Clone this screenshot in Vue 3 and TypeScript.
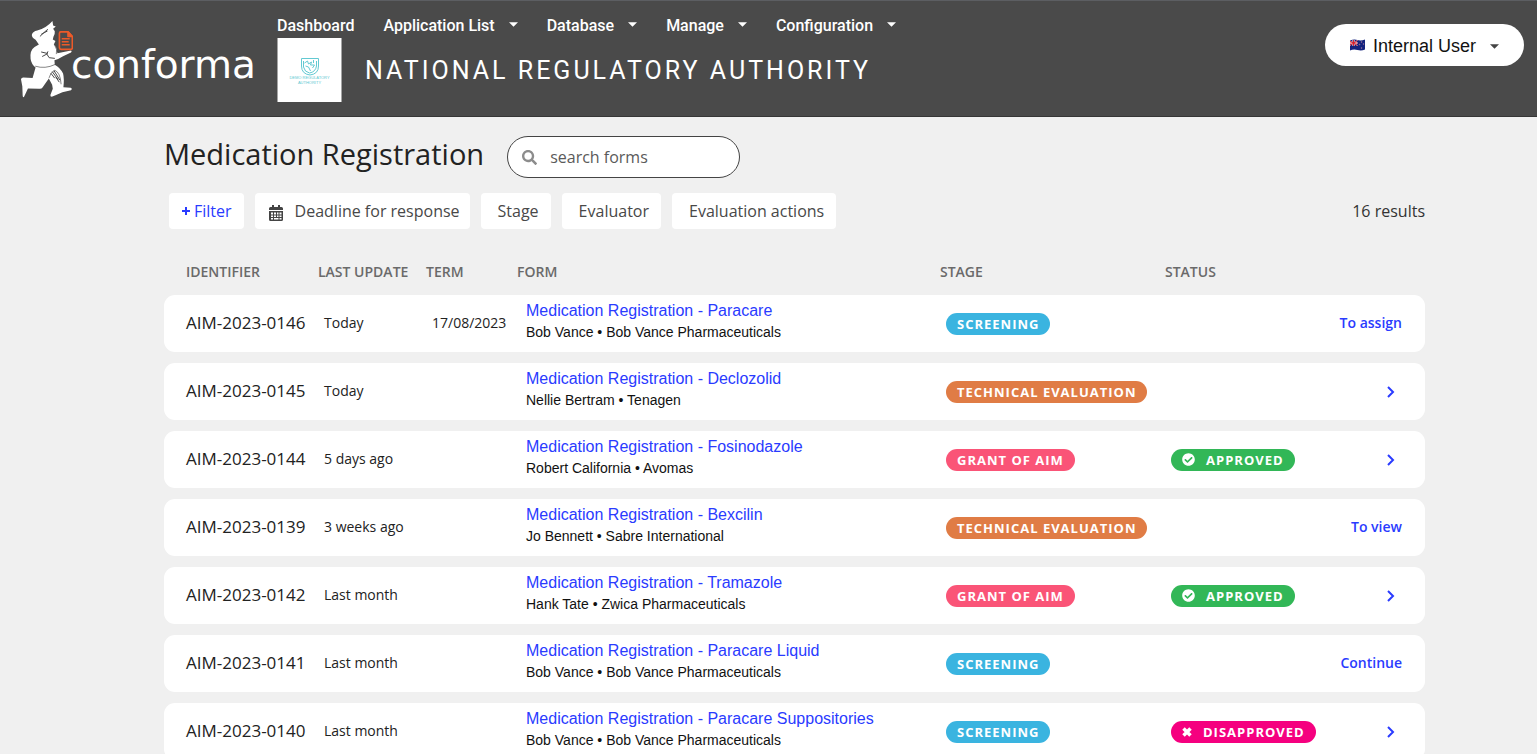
<script setup lang="ts">
interface MenuItem {
  label: string
  dropdown: boolean
}

type StageName = 'Screening' | 'Technical evaluation' | 'Grant of AIM'
type StatusName = 'Approved' | 'Disapproved'

interface Application {
  id: string
  updated: string
  term?: string
  form: string
  applicant: string
  stage: StageName
  status?: StatusName
  action?: string
}

const menu: MenuItem[] = [
  { label: 'Dashboard', dropdown: false },
  { label: 'Application List', dropdown: true },
  { label: 'Database', dropdown: true },
  { label: 'Manage', dropdown: true },
  { label: 'Configuration', dropdown: true },
]

const filters: string[] = ['Stage', 'Evaluator', 'Evaluation actions']

const stageClass: Record<StageName, string> = {
  'Screening': 'screening',
  'Technical evaluation': 'technical',
  'Grant of AIM': 'grant',
}

const applications: Application[] = [
  { id: 'AIM-2023-0146', updated: 'Today', term: '17/08/2023', form: 'Paracare', applicant: 'Bob Vance • Bob Vance Pharmaceuticals', stage: 'Screening', action: 'To assign' },
  { id: 'AIM-2023-0145', updated: 'Today', form: 'Declozolid', applicant: 'Nellie Bertram • Tenagen', stage: 'Technical evaluation' },
  { id: 'AIM-2023-0144', updated: '5 days ago', form: 'Fosinodazole', applicant: 'Robert California • Avomas', stage: 'Grant of AIM', status: 'Approved' },
  { id: 'AIM-2023-0139', updated: '3 weeks ago', form: 'Bexcilin', applicant: 'Jo Bennett • Sabre International', stage: 'Technical evaluation', action: 'To view' },
  { id: 'AIM-2023-0142', updated: 'Last month', form: 'Tramazole', applicant: 'Hank Tate • Zwica Pharmaceuticals', stage: 'Grant of AIM', status: 'Approved' },
  { id: 'AIM-2023-0141', updated: 'Last month', form: 'Paracare Liquid', applicant: 'Bob Vance • Bob Vance Pharmaceuticals', stage: 'Screening', action: 'Continue' },
  { id: 'AIM-2023-0140', updated: 'Last month', form: 'Paracare Suppositories', applicant: 'Bob Vance • Bob Vance Pharmaceuticals', stage: 'Screening', status: 'Disapproved' },
]
</script>

<template>
  <div class="page">
    <header class="topbar">
      <a class="brand" href="#">
        <svg class="mascot" viewBox="30 15 160 234" width="53" height="78" aria-hidden="true">
          <path fill="#fff" d="M128 17 L130 31 L138 34 L130 41 L135 48 Q136 58 131 65 L129 73 L137 78 L132 88 Q141 94 141 108 L143 115 L184 106 Q188 108 184 112 L160 124 Q148 132 134 136 L135 149 Q152 158 160 176 Q164 192 161 217 L183 219 Q189 222 184 226 L158 232 Q140 240 126 246 Q120 246 122 240 L129 222 L127 210 L117 191 L98 218 Q95 223 88 222 L54 221 L42 247 Q38 248 38 242 L37 214 L33 193 Q34 188 40 188 L68 189 L77 158 Q64 147 62 132 Q59 106 74 96 L87 88 L77 74 Q64 66 66 58 Q69 49 82 46 Q110 38 128 17 Z" />
          <g fill="none" stroke="#484848" stroke-linecap="round" stroke-linejoin="round">
            <path stroke-width="3" d="M91 63 Q102 52 113 43 M95 57 L112 48" />
            <path stroke-width="3" d="M95 111 L112 115 M98 124 L111 117 L118 128 L134 130 M111 117 L114 110" />
            <path stroke-width="2" d="M77 154 Q106 163 135 149 M135 90 Q144 104 140 116" />
            <path stroke-width="2" d="M118 188 Q121 172 135 166 Q152 173 154 207" />
            <path stroke-width="3" d="M124 176 L134 189 M128 171 L144 193 M133 168 L150 195 M139 188 L148 201" />
          </g>
          <g fill="none" stroke="#ec5a29" stroke-width="5" stroke-linejoin="round">
            <path d="M153 50 H175 L188 64 V99 Q188 103 184 103 H154 Q149 103 149 98 V55 Q149 50 153 50 Z" />
            <path fill="#ec5a29" d="M175 50 V64 H188 Z" />
            <path d="M156 71 H180 M156 80 H177 M156 89 H180" />
          </g>
        </svg>
        <span class="wordmark">conforma</span>
      </a>

      <div class="center">
        <nav class="menu">
          <template v-for="item in menu" :key="item.label">
            <button v-if="item.dropdown" type="button" class="menu-item">
              {{ item.label }}
              <svg class="caret" viewBox="0 0 10 5" width="9" height="5" aria-hidden="true"><path fill="currentColor" d="M0 0H10L5 5Z" /></svg>
            </button>
            <a v-else class="menu-item" href="#">{{ item.label }}</a>
          </template>
        </nav>
        <div class="authority">
          <svg class="crest" viewBox="0 0 64 64" width="65" height="64" role="img" aria-label="Demo Regulatory Authority">
            <rect width="64" height="64" fill="#fff" />
            <g fill="none" stroke="#62c9d2" stroke-width="1">
              <path d="M24 20.500 H41 V28 Q41 36 32.500 37 Q24 36 24 28 Z" />
              <path d="M26 23 V29 Q27 34 32 35 Q38 34 39 28 V23" />
              <path d="M27 25 L30 23 L31 26 L34 24 L33 27 L37 27 L35 30 M28 28 L31 29 L33 33 M36 22 V25" />
            </g>
            <text x="32" y="41" class="crest-text">DEMO REGULATORY</text>
            <text x="32" y="46" class="crest-text">AUTHORITY</text>
          </svg>
          <span class="authority-name">NATIONAL REGULATORY AUTHORITY</span>
        </div>
      </div>

      <button type="button" class="user">
        <svg class="flag" viewBox="0 0 30 24" width="15" height="12" aria-hidden="true">
          <path fill="#14237d" d="M0 3 Q8 0 15 2 T30 1 V21 Q23 24 15 22 T0 23 Z" />
          <path d="M0 4 L15 13 M15 3 L0 13" stroke="#fff" stroke-width="2" />
          <path d="M7 2 V14 M0 8 H15" stroke="#fff" stroke-width="4" />
          <path d="M7 2 V14 M0 8 H15 M0 4 L15 13 M15 3 L0 13" stroke="#d8232f" stroke-width="2" />
          <g fill="#d8232f" stroke="#8d8fc0" stroke-width="1"><circle cx="23" cy="6" r="1" /><circle cx="19" cy="11" r="1" /><circle cx="27" cy="10" r="1" /><circle cx="23" cy="18" r="1" /></g>
        </svg>
        <span>Internal User</span>
        <svg class="user-caret" viewBox="0 0 10 5" width="9" height="5" aria-hidden="true"><path fill="#444" d="M0 0H10L5 5Z" /></svg>
      </button>
    </header>

    <main class="content">
      <div class="heading">
        <h1>Medication Registration</h1>
        <label class="search">
          <svg viewBox="0 0 512 512" width="15" height="15" aria-hidden="true">
            <path fill="#8c8c8c" d="M505 442.700L405.300 343c-4.500-4.500-10.600-7-17-7H372c27.600-35.300 44-79.700 44-128C416 93.100 322.900 0 208 0S0 93.100 0 208s93.100 208 208 208c48.300 0 92.700-16.400 128-44v16.300c0 6.400 2.500 12.500 7 17l99.700 99.700c9.400 9.400 24.600 9.400 33.900 0l28.300-28.300c9.400-9.400 9.400-24.600.1-34zM208 336c-70.700 0-128-57.200-128-128 0-70.700 57.200-128 128-128 70.700 0 128 57.200 128 128 0 70.700-57.200 128-128 128z" />
          </svg>
          <input type="text" placeholder="search forms" aria-label="search forms">
        </label>
      </div>

      <div class="filters">
        <button type="button" class="chip add">
          <svg viewBox="0 0 8 8" width="8" height="8" aria-hidden="true"><path d="M4 0V8M0 4H8" stroke="currentColor" stroke-width="2" /></svg>
          Filter
        </button>
        <button type="button" class="chip dated">
          <svg viewBox="0 0 14 16" width="14" height="16" aria-hidden="true">
            <path fill="#444" d="M3 0h2v2h4V0h2v2h1.500A1.500 1.500 0 0 1 14 3.500V5H0V3.500A1.500 1.500 0 0 1 1.500 2H3zM0 6h14v8.500a1.500 1.500 0 0 1-1.500 1.500h-11A1.500 1.500 0 0 1 0 14.500z" />
            <path fill="#fff" d="M2 7.500h2v2H2zM5 7.500h2v2H5zM8 7.500h1.500v2H8zM10.500 7.500h2v2h-2zM2 10.500h2v1.500H2zM5 10.500h2v1.500H5zM8 10.500h1.500v1.500H8zM10.500 10.500h2v1.500h-2zM2 13h2v1.500H2zM5 13h4.500v1.500H5zM10.500 13h2v1.500h-2z" />
          </svg>
          Deadline for response
        </button>
        <button v-for="name in filters" :key="name" type="button" class="chip">{{ name }}</button>
        <span class="results">16 results</span>
      </div>

      <table class="list">
        <colgroup>
          <col class="col-id">
          <col class="col-updated">
          <col class="col-term">
          <col>
          <col class="col-stage">
          <col class="col-status">
          <col class="col-action">
        </colgroup>
        <thead>
          <tr>
            <th>Identifier</th>
            <th>Last update</th>
            <th>Term</th>
            <th>Form</th>
            <th>Stage</th>
            <th>Status</th>
            <td></td>
          </tr>
        </thead>
        <tbody>
          <tr v-for="app in applications" :key="app.id">
            <td class="id">{{ app.id }}</td>
            <td>{{ app.updated }}</td>
            <td>{{ app.term }}</td>
            <td class="form">
              <a href="#">Medication Registration - {{ app.form }}</a>
              <span>{{ app.applicant }}</span>
            </td>
            <td class="tag"><span class="pill" :class="stageClass[app.stage]">{{ app.stage }}</span></td>
            <td class="tag">
              <span v-if="app.status === 'Approved'" class="pill approved">
                <svg viewBox="0 0 512 512" width="13" height="13" aria-hidden="true"><path fill="#fff" d="M504 256c0 137-111 248-248 248S8 393 8 256 119 8 256 8s248 111 248 248zM227.300 387.300l184-184c6.200-6.200 6.200-16.400 0-22.600l-22.600-22.600c-6.200-6.200-16.400-6.200-22.600 0L216 308.100l-70.100-70.100c-6.200-6.200-16.400-6.200-22.600 0l-22.600 22.600c-6.200 6.200-6.200 16.400 0 22.600l104 104c6.200 6.300 16.400 6.300 22.600.1z" /></svg>
                {{ app.status }}
              </span>
              <span v-else-if="app.status === 'Disapproved'" class="pill disapproved">
                <svg viewBox="0 0 10 10" width="10" height="10" aria-hidden="true"><path d="M1.500 1.500L8.500 8.500M8.500 1.500L1.500 8.500" stroke="#fff" stroke-width="3.500" /></svg>
                {{ app.status }}
              </span>
            </td>
            <td class="action">
              <a v-if="app.action" href="#">{{ app.action }}</a>
              <a v-else class="open" href="#" aria-label="Open">
                <svg viewBox="0 0 8 12" width="8" height="12" aria-hidden="true"><path d="M1 1L6 6L1 11" fill="none" stroke="currentColor" stroke-width="2" /></svg>
              </a>
            </td>
          </tr>
        </tbody>
      </table>
    </main>
  </div>
</template>

<style>
body {
  background: #f0f0f0;
}
html {
  overflow: hidden;
}
</style>

<style scoped>
.page {
  font-family: "Open Sans", sans-serif;
  color: #222;
}
a {
  text-decoration: none;
}
button {
  border: 0;
  margin: 0;
  font-family: inherit;
  cursor: pointer;
}
.topbar {
  display: flex;
  align-items: flex-start;
  box-sizing: border-box;
  height: 117px;
  padding: 0 13px 0 20px;
  background: #4a4a4a;
  border-top: 1px solid #5c5e62;
  border-bottom: 1px solid #363636;
}
.brand {
  display: flex;
  align-items: flex-start;
  width: 257px;
  padding-top: 19px;
  flex: none;
  color: #fff;
}
.mascot {
  flex: none;
}
.wordmark {
  margin-left: -2px;
  padding-top: 21px;
  font: 39px/48px "DejaVu Sans", sans-serif;
}
.center {
  flex: 1;
}
.menu {
  display: flex;
  gap: 29px;
  padding-top: 13px;
}
.menu-item {
  display: flex;
  align-items: center;
  padding: 0;
  background: none;
  color: #fff;
  font: 500 16px/24px Roboto, sans-serif;
  white-space: nowrap;
}
.caret {
  margin: 0 0 3px 14px;
}
.authority {
  display: flex;
  align-items: center;
  gap: 23px;
}
.crest-text {
  fill: #62c9d2;
  font: 4px "Liberation Sans", sans-serif;
  text-anchor: middle;
}
.authority-name {
  padding-top: 2px;
  color: #fff;
  font: 25px/32px Roboto, sans-serif;
  letter-spacing: 3px;
  white-space: nowrap;
}
.user {
  display: flex;
  align-items: center;
  height: 42px;
  margin-top: 23px;
  padding: 2px 25px 0;
  border-radius: 21px;
  background: #fff;
  color: #111;
  font: 18px/24px "Liberation Sans", Arial, sans-serif;
  white-space: nowrap;
}
.flag {
  margin: 0 8px 2px 0;
}
.user-caret {
  margin-left: 14px;
}
.content {
  padding: 19px 112px 0 164px;
}
.heading {
  display: flex;
  align-items: flex-start;
  gap: 23px;
}
h1 {
  margin: 0;
  font-size: 29px;
  font-weight: 400;
  line-height: 36px;
  white-space: nowrap;
}
.search {
  display: flex;
  align-items: center;
  box-sizing: border-box;
  width: 233px;
  height: 42px;
  padding: 0 14px;
  border: 1px solid #444;
  border-radius: 21px;
  background: #fff;
}
.search input {
  flex: 1;
  min-width: 0;
  margin-left: 13px;
  padding: 0;
  border: 0;
  outline: 0;
  background: none;
  color: #555;
  font: 16px/24px "Open Sans", sans-serif;
}
.search input::placeholder {
  color: #5a5a5a;
  opacity: 1;
}
.filters {
  display: flex;
  align-items: center;
  gap: 11px;
  margin: 15px 0 0 5px;
}
.chip {
  display: flex;
  align-items: center;
  height: 36px;
  padding: 0 12px 0 17px;
  border-radius: 4px;
  background: #fff;
  color: #484848;
  font-size: 16px;
  line-height: 24px;
  white-space: nowrap;
}
.chip.add {
  gap: 4px;
  padding: 0 12px 0 13px;
  color: #2a3bff;
}
.chip.dated {
  gap: 12px;
  padding: 0 10px 0 14px;
}
.chip.dated svg {
  margin-top: 4px;
}
.results {
  margin-left: auto;
  font-size: 16px;
  line-height: 24px;
  color: #333;
}
.list {
  width: 100%;
  margin-top: 20px;
  border-collapse: separate;
  border-spacing: 0 11px;
  table-layout: fixed;
}
.col-id {
  width: 154px;
}
.col-updated {
  width: 108px;
}
.col-term {
  width: 91px;
}
.col-stage {
  width: 225px;
}
.col-status {
  width: 160px;
}
.col-action {
  width: 100px;
}
th {
  height: 24px;
  padding: 0;
  color: #6a6a6a;
  font-size: 14px;
  font-weight: 600;
  line-height: 24px;
  text-align: left;
  text-transform: uppercase;
  white-space: nowrap;
}
th:first-child {
  padding-left: 22px;
}
tbody td {
  box-sizing: border-box;
  height: 57px;
  padding: 0 0 2px 6px;
  background: #fff;
  font-size: 14px;
  line-height: 20px;
  white-space: nowrap;
}
tbody td:first-child {
  padding-left: 22px;
  border-radius: 11px 0 0 11px;
}
tbody td:last-child {
  padding-right: 23px;
  border-radius: 0 11px 11px 0;
}
tbody td.id {
  font-size: 17px;
}
tbody td.tag {
  padding-bottom: 0;
}
tbody td.form {
  padding: 0 0 5px 9px;
  font-family: "Liberation Sans", Arial, sans-serif;
}
.form a {
  display: block;
  color: #2a3bff;
  font-size: 16px;
  line-height: 22px;
}
.form span {
  display: block;
  color: #111;
  line-height: 20px;
}
.pill {
  display: inline-flex;
  align-items: center;
  height: 22px;
  padding: 0 11px;
  border-radius: 11px;
  color: #fff;
  font-size: 13px;
  font-weight: 700;
  letter-spacing: 1px;
  line-height: 22px;
  text-transform: uppercase;
  vertical-align: middle;
}
.pill svg {
  margin-right: 11px;
}
.screening {
  background: #3ab4e0;
}
.technical {
  background: #e07c45;
}
.grant {
  background: #fa5477;
}
.approved {
  background: #32b757;
}
.disapproved {
  background: #f5007f;
}
.action {
  text-align: right;
}
.action a {
  color: #2a3bff;
  font-size: 14px;
  font-weight: 600;
}
.action .open {
  display: inline-flex;
  padding-right: 7px;
  vertical-align: middle;
}
</style>
